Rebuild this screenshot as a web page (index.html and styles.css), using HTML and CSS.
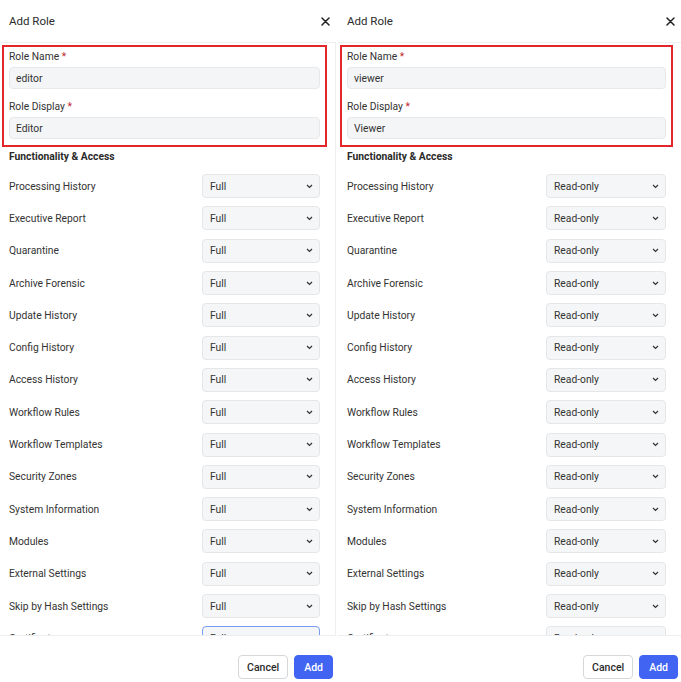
FILE: index.html
```html
<!DOCTYPE html>
<html lang="en">
<head>
  <meta charset="UTF-8">
  <title>Add Role</title>
  <link rel="stylesheet" href="styles.css">
</head>
<body>
  <div class="shots">
    <!-- editor role -->
    <section class="modal modal-left">
      <header class="modal-head">
        <h2>Add Role</h2>
        <span class="close"><svg width="9" height="9" viewBox="0 0 9 9"><path d="M1 1L8 8M8 1L1 8" stroke="#222" stroke-width="1.5" stroke-linecap="round"/></svg></span>
      </header>
      <div class="modal-body">
        <div class="mark">
          <label class="field-label">Role Name <span class="req">*</span></label>
          <div class="input">editor</div>
          <label class="field-label second">Role Display <span class="req">*</span></label>
          <div class="input">Editor</div>
        </div>
        <h3 class="section-title">Functionality &amp; Access</h3>
        <div class="perm-list">
          <div class="perm-row"><span>Processing History</span><div class="select">Full<svg class="chev" width="7" height="5" viewBox="0 0 7 5"><path d="M1 1l2.5 2.5L6 1" fill="none" stroke="#333" stroke-width="1.2"/></svg></div></div>
          <div class="perm-row"><span>Executive Report</span><div class="select">Full<svg class="chev" width="7" height="5" viewBox="0 0 7 5"><path d="M1 1l2.5 2.5L6 1" fill="none" stroke="#333" stroke-width="1.2"/></svg></div></div>
          <div class="perm-row"><span>Quarantine</span><div class="select">Full<svg class="chev" width="7" height="5" viewBox="0 0 7 5"><path d="M1 1l2.5 2.5L6 1" fill="none" stroke="#333" stroke-width="1.2"/></svg></div></div>
          <div class="perm-row"><span>Archive Forensic</span><div class="select">Full<svg class="chev" width="7" height="5" viewBox="0 0 7 5"><path d="M1 1l2.5 2.5L6 1" fill="none" stroke="#333" stroke-width="1.2"/></svg></div></div>
          <div class="perm-row"><span>Update History</span><div class="select">Full<svg class="chev" width="7" height="5" viewBox="0 0 7 5"><path d="M1 1l2.5 2.5L6 1" fill="none" stroke="#333" stroke-width="1.2"/></svg></div></div>
          <div class="perm-row"><span>Config History</span><div class="select">Full<svg class="chev" width="7" height="5" viewBox="0 0 7 5"><path d="M1 1l2.5 2.5L6 1" fill="none" stroke="#333" stroke-width="1.2"/></svg></div></div>
          <div class="perm-row"><span>Access History</span><div class="select">Full<svg class="chev" width="7" height="5" viewBox="0 0 7 5"><path d="M1 1l2.5 2.5L6 1" fill="none" stroke="#333" stroke-width="1.2"/></svg></div></div>
          <div class="perm-row"><span>Workflow Rules</span><div class="select">Full<svg class="chev" width="7" height="5" viewBox="0 0 7 5"><path d="M1 1l2.5 2.5L6 1" fill="none" stroke="#333" stroke-width="1.2"/></svg></div></div>
          <div class="perm-row"><span>Workflow Templates</span><div class="select">Full<svg class="chev" width="7" height="5" viewBox="0 0 7 5"><path d="M1 1l2.5 2.5L6 1" fill="none" stroke="#333" stroke-width="1.2"/></svg></div></div>
          <div class="perm-row"><span>Security Zones</span><div class="select">Full<svg class="chev" width="7" height="5" viewBox="0 0 7 5"><path d="M1 1l2.5 2.5L6 1" fill="none" stroke="#333" stroke-width="1.2"/></svg></div></div>
          <div class="perm-row"><span>System Information</span><div class="select">Full<svg class="chev" width="7" height="5" viewBox="0 0 7 5"><path d="M1 1l2.5 2.5L6 1" fill="none" stroke="#333" stroke-width="1.2"/></svg></div></div>
          <div class="perm-row"><span>Modules</span><div class="select">Full<svg class="chev" width="7" height="5" viewBox="0 0 7 5"><path d="M1 1l2.5 2.5L6 1" fill="none" stroke="#333" stroke-width="1.2"/></svg></div></div>
          <div class="perm-row"><span>External Settings</span><div class="select">Full<svg class="chev" width="7" height="5" viewBox="0 0 7 5"><path d="M1 1l2.5 2.5L6 1" fill="none" stroke="#333" stroke-width="1.2"/></svg></div></div>
          <div class="perm-row"><span>Skip by Hash Settings</span><div class="select">Full<svg class="chev" width="7" height="5" viewBox="0 0 7 5"><path d="M1 1l2.5 2.5L6 1" fill="none" stroke="#333" stroke-width="1.2"/></svg></div></div>
          <div class="perm-row"><span>Certificates</span><div class="select focused">Full<svg class="chev" width="7" height="5" viewBox="0 0 7 5"><path d="M1 1l2.5 2.5L6 1" fill="none" stroke="#333" stroke-width="1.2"/></svg></div></div>
        </div>
      </div>
      <footer class="modal-foot">
        <button class="btn">Cancel</button>
        <button class="btn btn-primary">Add</button>
      </footer>
    </section>

    <!-- viewer role -->
    <section class="modal modal-right">
      <header class="modal-head">
        <h2>Add Role</h2>
        <span class="close"><svg width="9" height="9" viewBox="0 0 9 9"><path d="M1 1L8 8M8 1L1 8" stroke="#222" stroke-width="1.5" stroke-linecap="round"/></svg></span>
      </header>
      <div class="modal-body">
        <div class="mark">
          <label class="field-label">Role Name <span class="req">*</span></label>
          <div class="input">viewer</div>
          <label class="field-label second">Role Display <span class="req">*</span></label>
          <div class="input">Viewer</div>
        </div>
        <h3 class="section-title">Functionality &amp; Access</h3>
        <div class="perm-list">
          <div class="perm-row"><span>Processing History</span><div class="select">Read-only<svg class="chev" width="7" height="5" viewBox="0 0 7 5"><path d="M1 1l2.5 2.5L6 1" fill="none" stroke="#333" stroke-width="1.2"/></svg></div></div>
          <div class="perm-row"><span>Executive Report</span><div class="select">Read-only<svg class="chev" width="7" height="5" viewBox="0 0 7 5"><path d="M1 1l2.5 2.5L6 1" fill="none" stroke="#333" stroke-width="1.2"/></svg></div></div>
          <div class="perm-row"><span>Quarantine</span><div class="select">Read-only<svg class="chev" width="7" height="5" viewBox="0 0 7 5"><path d="M1 1l2.5 2.5L6 1" fill="none" stroke="#333" stroke-width="1.2"/></svg></div></div>
          <div class="perm-row"><span>Archive Forensic</span><div class="select">Read-only<svg class="chev" width="7" height="5" viewBox="0 0 7 5"><path d="M1 1l2.5 2.5L6 1" fill="none" stroke="#333" stroke-width="1.2"/></svg></div></div>
          <div class="perm-row"><span>Update History</span><div class="select">Read-only<svg class="chev" width="7" height="5" viewBox="0 0 7 5"><path d="M1 1l2.5 2.5L6 1" fill="none" stroke="#333" stroke-width="1.2"/></svg></div></div>
          <div class="perm-row"><span>Config History</span><div class="select">Read-only<svg class="chev" width="7" height="5" viewBox="0 0 7 5"><path d="M1 1l2.5 2.5L6 1" fill="none" stroke="#333" stroke-width="1.2"/></svg></div></div>
          <div class="perm-row"><span>Access History</span><div class="select">Read-only<svg class="chev" width="7" height="5" viewBox="0 0 7 5"><path d="M1 1l2.5 2.5L6 1" fill="none" stroke="#333" stroke-width="1.2"/></svg></div></div>
          <div class="perm-row"><span>Workflow Rules</span><div class="select">Read-only<svg class="chev" width="7" height="5" viewBox="0 0 7 5"><path d="M1 1l2.5 2.5L6 1" fill="none" stroke="#333" stroke-width="1.2"/></svg></div></div>
          <div class="perm-row"><span>Workflow Templates</span><div class="select">Read-only<svg class="chev" width="7" height="5" viewBox="0 0 7 5"><path d="M1 1l2.5 2.5L6 1" fill="none" stroke="#333" stroke-width="1.2"/></svg></div></div>
          <div class="perm-row"><span>Security Zones</span><div class="select">Read-only<svg class="chev" width="7" height="5" viewBox="0 0 7 5"><path d="M1 1l2.5 2.5L6 1" fill="none" stroke="#333" stroke-width="1.2"/></svg></div></div>
          <div class="perm-row"><span>System Information</span><div class="select">Read-only<svg class="chev" width="7" height="5" viewBox="0 0 7 5"><path d="M1 1l2.5 2.5L6 1" fill="none" stroke="#333" stroke-width="1.2"/></svg></div></div>
          <div class="perm-row"><span>Modules</span><div class="select">Read-only<svg class="chev" width="7" height="5" viewBox="0 0 7 5"><path d="M1 1l2.5 2.5L6 1" fill="none" stroke="#333" stroke-width="1.2"/></svg></div></div>
          <div class="perm-row"><span>External Settings</span><div class="select">Read-only<svg class="chev" width="7" height="5" viewBox="0 0 7 5"><path d="M1 1l2.5 2.5L6 1" fill="none" stroke="#333" stroke-width="1.2"/></svg></div></div>
          <div class="perm-row"><span>Skip by Hash Settings</span><div class="select">Read-only<svg class="chev" width="7" height="5" viewBox="0 0 7 5"><path d="M1 1l2.5 2.5L6 1" fill="none" stroke="#333" stroke-width="1.2"/></svg></div></div>
          <div class="perm-row"><span>Certificates</span><div class="select">Read-only<svg class="chev" width="7" height="5" viewBox="0 0 7 5"><path d="M1 1l2.5 2.5L6 1" fill="none" stroke="#333" stroke-width="1.2"/></svg></div></div>
        </div>
      </div>
      <footer class="modal-foot">
        <button class="btn">Cancel</button>
        <button class="btn btn-primary">Add</button>
      </footer>
    </section>
  </div>
</body>
</html>
```

FILE: styles.css
```css
body {
  margin: 0;
  font-family: Roboto, 'Liberation Sans', sans-serif;
  color: #333;
  background: #fff;
}
.shots {
  display: flex;
  gap: 2px;
  height: 682px;
  overflow: hidden;
}
.modal {
  display: flex;
  flex-direction: column;
  height: 682px;
  background: #fff;
}
.modal-left {
  width: 336px;
}
.modal-right {
  flex: 1;
}
.modal-head {
  height: 42px;
  display: flex;
  align-items: center;
  justify-content: space-between;
  padding: 0 6px 0 9px;
  border-bottom: 1px solid #eceef0;
}
.modal-head h2 {
  margin: 0;
  font-size: 11.5px;
  font-weight: 400;
  color: #2b2b2b;
}
.close {
  display: flex;
  width: 9px;
  height: 9px;
}
.modal-body {
  flex: 1;
  overflow: hidden;
  padding: 2px 15px 0 9px;
}
.modal-left .modal-body {
  border-right: 1px solid #eceef0;
}
.mark {
  border: 2px solid #e3262b;
  margin: 0 -7px;
  padding: 3px 5px 6px;
}
.field-label {
  display: block;
  font-size: 10.3px;
  line-height: 14px;
  color: #333;
}
.field-label.second {
  margin-top: 11px;
}
.req {
  color: #c0262d;
}
.input {
  margin-top: 3px;
  height: 22px;
  box-sizing: border-box;
  padding: 0 6px;
  display: flex;
  align-items: center;
  font-size: 10.3px;
  background: #f4f5f6;
  border: 1px solid #e6e8ea;
  border-radius: 4px;
}
.section-title {
  margin: 3px 0 6px;
  font-size: 10.3px;
  line-height: 14px;
  font-weight: 700;
  color: #2b2b2b;
}
.perm-row {
  height: 32.3px;
  display: flex;
  align-items: center;
  justify-content: space-between;
  font-size: 10.3px;
}
.select {
  width: 118px;
  height: 24px;
  box-sizing: border-box;
  display: flex;
  align-items: center;
  justify-content: space-between;
  padding: 0 6px 0 7px;
  background: #f5f6f7;
  border: 1px solid #e4e6e8;
  border-radius: 4px;
  font-size: 10.3px;
}
.modal-right .select {
  width: 120px;
}
.select.focused {
  border-color: #7b9cf2;
}
.chev {
  display: block;
}
.modal-foot {
  height: 43px;
  border-top: 1px solid #eceef0;
  display: flex;
  justify-content: flex-end;
  align-items: flex-end;
  gap: 6px;
  padding: 0 3px 3px 0;
}
.btn {
  height: 24px;
  padding: 0 8px;
  font-family: inherit;
  font-size: 10.5px;
  font-weight: 500;
  color: #2b2b2b;
  background: #fff;
  border: 1px solid #d5d8db;
  border-radius: 4px;
}
.btn-primary {
  background: #4165f2;
  border-color: #4165f2;
  color: #fff;
  padding: 0 9px;
}
```
